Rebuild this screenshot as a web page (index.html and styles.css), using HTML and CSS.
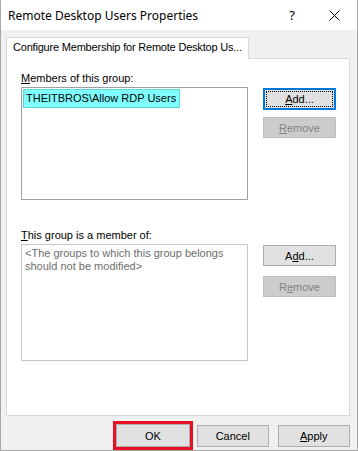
FILE: index.html
```html
<!DOCTYPE html>
<html>
<head>
<meta charset="utf-8">
<link rel="stylesheet" href="styles.css">
</head>
<body>
<div class="window">
  <div class="titlebar">
    <span class="title">Remote Desktop Users Properties</span>
    <span class="help">?</span>
    <span class="close"><svg width="11" height="11" viewBox="0 0 11 11"><path d="M0.5 0.5L10.5 10.5M10.5 0.5L0.5 10.5" stroke="#000" stroke-width="1" fill="none"/></svg></span>
  </div>
  <div class="body">
    <div class="tabs"><div class="tab">Configure Membership for Remote Desktop Us...</div></div>
    <div class="panel">
      <div class="label"><u>M</u>embers of this group:</div>
      <div class="row">
        <div class="list list1">
          <div class="item">THEITBROS\Allow RDP Users</div>
        </div>
        <div class="btncol">
          <div class="btn focused"><span class="focus"><u>A</u>dd...</span></div>
          <div class="btn disabled"><u>R</u>emove</div>
        </div>
      </div>
      <div class="label label2"><u>T</u>his group is a member of:</div>
      <div class="row">
        <div class="list list2">
          <div class="placeholder">&lt;The groups to which this group belongs should not be modified&gt;</div>
        </div>
        <div class="btncol btncol2">
          <div class="btn">A<u>d</u>d...</div>
          <div class="btn disabled">R<u>e</u>move</div>
        </div>
      </div>
    </div>
    <div class="footer">
      <div class="okwrap"><div class="btn ok">OK</div></div>
      <div class="btn cancel">Cancel</div>
      <div class="btn apply"><u>A</u>pply</div>
    </div>
  </div>
</div>
</body>
</html>
```
FILE: styles.css
```css
* { box-sizing: border-box; }
html, body { margin: 0; padding: 0; background: #fff; }
body { font-family: "Liberation Sans", Arial, sans-serif; font-size: 11px; color: #000; }
.window {
  width: 358px; height: 451px;
  border: 1px solid #a8a8a8; border-top: none;
  display: flex; flex-direction: column;
}
.titlebar {
  height: 30px; background: #fff;
  display: flex; align-items: center;
  padding-left: 7px;
}
.title { font-family: "Noto Sans", sans-serif; font-size: 12px; flex: 1; padding-top: 1px; }
.help { font-family: "Noto Sans", sans-serif; font-size: 13px; width: 20px; margin-right: 27px; text-align: center; }
.close { width: 11px; height: 11px; margin-right: 17px; display: flex; }
.body {
  flex: 1; background: #f0f0f0;
  padding: 7px 7px 0 5px;
  display: flex; flex-direction: column;
}
.tabs { display: flex; height: 21px; }
.tab {
  width: 243px; height: 22px;
  background: #fff;
  border: 1px solid #d9d9d9; border-bottom: none;
  padding: 3px 0 0 6px;
  white-space: nowrap;
  letter-spacing: -0.2px;
  position: relative; z-index: 1;
}
.panel {
  width: 344px; height: 358px;
  background: #fff; border: 1px solid #d9d9d9;
  padding: 12px 0 0 14px;
}
.label { height: 14px; line-height: 14px; margin-bottom: 2px; }
.label2 { margin-top: 28px; }
.row { display: flex; align-items: flex-start; }
.list {
  width: 227px; background: #fff;
  border: 1px solid #a0a0a0;
  padding: 1px;
}
.list1 { height: 113px; }
.list2 { height: 117px; border-color: #c8c8c8; }
.item {
  display: inline-block;
  background: #7fffff;
  border: 1px solid #5ad8d8;
  height: 19px; line-height: 17px;
  padding: 0 3px 0 2px;
  font-size: 11px;
}
.placeholder { color: #6d6d6d; line-height: 13px; padding: 1px 2px; width: 222px; }
.btncol { display: flex; flex-direction: column; gap: 7px; margin-left: 15px; padding-top: 1px; }
.btncol2 { gap: 10px; padding-top: 1px; }
.btn {
  width: 73px; height: 21px;
  background: #e1e1e1; border: 1px solid #adadad;
  display: flex; align-items: center; justify-content: center;
  font-size: 11px;
}
.btn.focused { border: 2px solid #0078d7; padding: 1px; height: 22px; }
.focus {
  width: 100%; height: 100%;
  outline: 1px dotted #000; outline-offset: -1px;
  display: flex; align-items: center; justify-content: center;
}
.btn.disabled { background: #cccccc; border-color: #bfbfbf; color: #838383; }
.footer {
  display: flex; align-items: center;
  padding-left: 107px;
  margin-top: 5px;
}
.okwrap { border: 3px solid #e81123; padding: 0; }
.ok { width: 74px; height: 23px; }
.cancel { margin-left: 4px; width: 73px; height: 22px; }
.apply { margin-left: 9px; width: 74px; height: 22px; }
```
